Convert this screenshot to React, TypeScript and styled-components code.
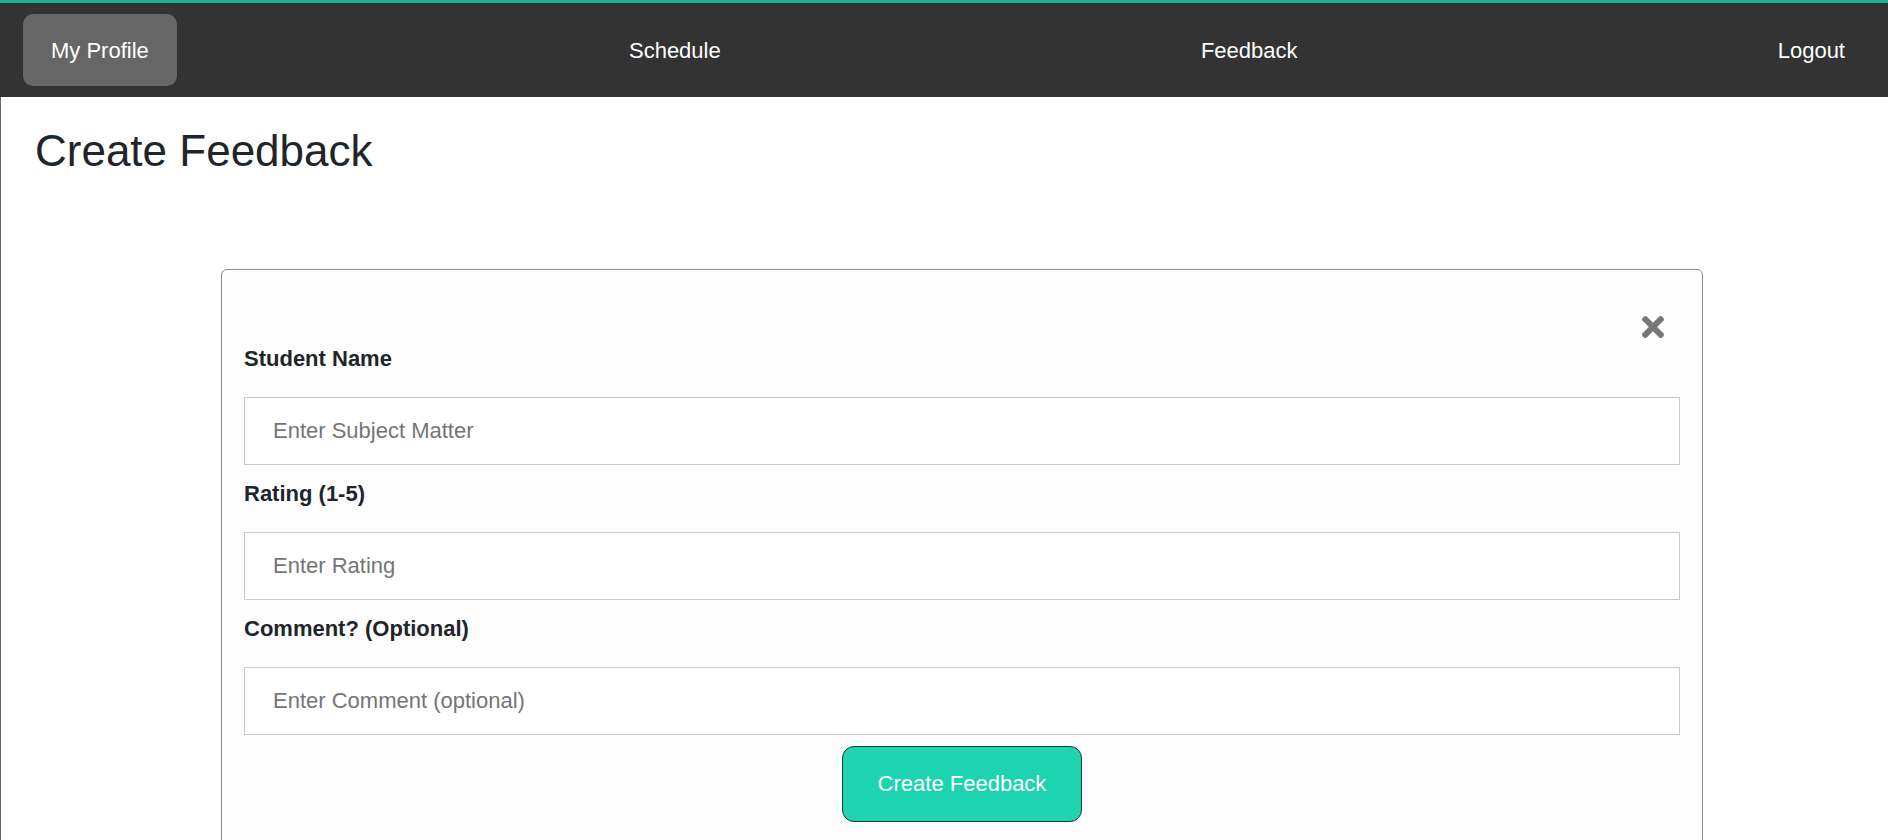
import React from "react";
import styled, { createGlobalStyle } from "styled-components";
import { FaTimes } from "react-icons/fa";

const Global = createGlobalStyle`
  html, body { margin: 0; padding: 0; background: #ffffff; }
  body { font-family: "Liberation Sans", Arial, sans-serif; color: #212529; }
  * { box-sizing: border-box; }
`;

const Page = styled.div`
  min-height: 840px;
  display: flex;
  flex-direction: column;
`;

const NavBar = styled.nav`
  border-top: 3px solid #1fae8e;
  background: #333333;
  height: 97px;
  display: flex;
  align-items: center;
  justify-content: space-between;
  padding: 0 15px 0 23px;
`;

const NavItem = styled.a<{ $active?: boolean }>`
  height: 72px;
  display: flex;
  align-items: center;
  padding: 1px 28px 0;
  border-radius: 10px;
  background: ${(p) => (p.$active ? "#666666" : "transparent")};
  color: #ffffff;
  font-size: 22px;
  text-decoration: none;
  cursor: pointer;
`;

const Main = styled.main`
  flex: 1;
  border-left: 1px solid #6a6a6a;
  padding: 28px 0 0 34px;
`;

const Title = styled.h1`
  margin: 0;
  font-size: 44px;
  font-weight: 400;
  line-height: 1.2;
  color: #212529;
`;

const Card = styled.div`
  margin: 91px 0 0 186px;
  width: 1482px;
  min-height: 600px;
  border: 1px solid #8c8c8c;
  border-radius: 6px;
  background: #fdfdfd;
  padding: 22px;
  display: flex;
  flex-direction: column;
`;

const CloseRow = styled.div`
  height: 54px;
  display: flex;
  justify-content: flex-end;
  align-items: flex-start;
`;

const CloseButton = styled.button`
  margin: 19px 11px 0 0;
  padding: 0;
  border: none;
  background: transparent;
  color: #777777;
  display: flex;
  cursor: pointer;
`;

const Fields = styled.div`
  display: flex;
  flex-direction: column;
  gap: 16px;
`;

const Field = styled.div`
  display: flex;
  flex-direction: column;
`;

const Label = styled.label`
  font-size: 22px;
  font-weight: 700;
  line-height: 25px;
  color: #212529;
  margin-bottom: 26px;
`;

const Input = styled.input`
  height: 68px;
  width: 100%;
  border: 1px solid #c9c9c9;
  background: #ffffff;
  padding: 0 28px;
  font-family: "Liberation Sans", Arial, sans-serif;
  font-size: 22px;
  color: #212529;
  outline: none;
  &::placeholder { color: #757575; }
`;

const ButtonRow = styled.div`
  display: flex;
  justify-content: center;
  margin-top: 11px;
`;

const SubmitButton = styled.button`
  width: 240px;
  height: 76px;
  background: #1dd3b0;
  border: 1px solid #1d3a33;
  border-radius: 12px;
  color: #ffffff;
  font-family: "Liberation Sans", Arial, sans-serif;
  font-size: 22px;
  cursor: pointer;
`;

const fields = [
  { label: "Student Name", placeholder: "Enter Subject Matter" },
  { label: "Rating (1-5)", placeholder: "Enter Rating" },
  { label: "Comment? (Optional)", placeholder: "Enter Comment (optional)" },
];

export default function App() {
  return (
    <Page>
      <Global />
      <NavBar>
        <NavItem $active>My Profile</NavItem>
        <NavItem>Schedule</NavItem>
        <NavItem>Feedback</NavItem>
        <NavItem>Logout</NavItem>
      </NavBar>
      <Main>
        <Title>Create Feedback</Title>
        <Card>
          <CloseRow>
            <CloseButton aria-label="Close">
              <FaTimes size={32} />
            </CloseButton>
          </CloseRow>
          <Fields>
            {fields.map((f) => (
              <Field key={f.label}>
                <Label>{f.label}</Label>
                <Input placeholder={f.placeholder} />
              </Field>
            ))}
          </Fields>
          <ButtonRow>
            <SubmitButton>Create Feedback</SubmitButton>
          </ButtonRow>
        </Card>
      </Main>
    </Page>
  );
}
